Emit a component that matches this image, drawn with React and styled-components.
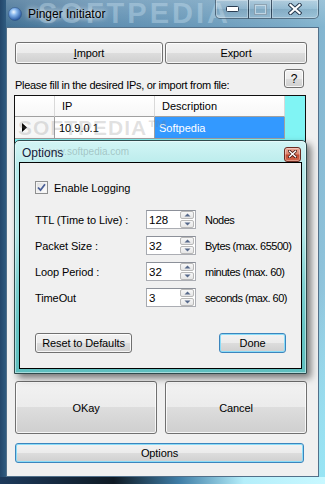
import React from 'react';
import styled, { createGlobalStyle } from 'styled-components';

const Global = createGlobalStyle`
  html, body { margin: 0; padding: 0; background: #3d6688; }
  body { font-family: "Liberation Sans", Arial, sans-serif; font-size: 11px; color: #000; }
  * { box-sizing: border-box; }
`;

const Window = styled.div`
  position: relative;
  width: 325px;
  height: 484px;
  overflow: hidden;
  display: flex;
  flex-direction: column;
  background:
    linear-gradient(90deg, #1d3a5c 0%, #0f1a24 35%, #3f7da6 55%, #b4eefa 75%, #c8f8ff 100%) left bottom / 100% 7px no-repeat,
    linear-gradient(90deg, #23476b 0, #2f5b80 6px, rgba(0,0,0,0) 6px) left top / 100% 100% no-repeat,
    linear-gradient(180deg, rgba(0,0,0,0) 60%, rgba(150,230,245,0.9) 100%) right top / 7px 100% no-repeat,
    linear-gradient(180deg, rgba(255,255,255,0.2) 0, rgba(255,255,255,0) 27px),
    linear-gradient(100deg, #3e6c90 0%, #5d8db0 25%, #6a9aba 50%, #79a9c6 70%, #8ec2da 90%, #a4dcee 100%);
`;

const TitleBar = styled.div`
  position: relative;
  height: 27px;
  display: flex;
  align-items: flex-start;
  padding-left: 8px;
  flex-shrink: 0;
`;

const TitleWatermark = styled.span`
  position: absolute;
  left: 38px;
  top: 0;
  font-size: 29px;
  line-height: 27px;
  font-weight: bold;
  letter-spacing: 3px;
  color: rgba(205, 228, 242, 0.38);
  pointer-events: none;
  white-space: nowrap;
`;

const GlobeIcon = styled.svg`
  margin-top: 7px;
  position: relative;
  flex-shrink: 0;
`;

const TitleText = styled.span`
  position: relative;
  margin-left: 6px;
  margin-top: 6px;
  font-size: 12px;
  line-height: 16px;
  color: #000;
  text-shadow: 0 0 5px rgba(255,255,255,0.95), 0 0 10px rgba(255,255,255,0.7);
`;

const Caption = styled.div`
  position: relative;
  margin-left: auto;
  margin-right: 6px;
  display: flex;
  height: 19px;
`;

const CapBtn = styled.div`
  width: ${p => p.$w}px;
  height: 19px;
  margin-left: ${p => (p.$first ? 0 : -1)}px;
  border: 1px solid rgba(20, 40, 60, 0.55);
  border-top: none;
  border-radius: ${p => (p.$first ? '0 0 0 5px' : p.$last ? '0 0 5px 0' : '0')};
  box-shadow: inset 0 0 0 1px rgba(255,255,255,0.3);
  background: linear-gradient(180deg, rgba(255,255,255,0.28) 0%, rgba(255,255,255,0.08) 50%, rgba(0,0,0,0.04) 50%, rgba(255,255,255,0.16) 100%);
  display: flex;
  align-items: center;
  justify-content: center;
`;

const Client = styled.div`
  margin: 0 6px 7px 6px;
  height: 450px;
  background: #f0f0f0;
  border: 1px solid #52708a;
  display: flex;
  flex-direction: column;
  padding: 14px 0 0 8px;
`;

const Btn = styled.button`
  font-family: inherit;
  font-size: 11px;
  color: #000;
  width: ${p => p.$w}px;
  height: ${p => p.$h || 22}px;
  padding: 0;
  margin: 0;
  flex-shrink: 0;
  border: 1px solid ${p => (p.$default ? '#3c85bd' : '#707070')};
  border-radius: 3px;
  background: linear-gradient(180deg, #f2f2f2 0%, #ebebeb 50%, #dddddd 50%, #cfcfcf 100%);
  box-shadow: inset 0 0 0 1px ${p => (p.$default ? '#8adcf8' : 'rgba(255,255,255,0.8)')};
  display: flex;
  align-items: center;
  justify-content: center;
  cursor: default;
  letter-spacing: -0.1px;
`;

const TopRow = styled.div`
  display: flex;
  gap: 2px;
`;

const HelpRow = styled.div`
  margin-top: 5px;
  height: 26px;
  display: flex;
  justify-content: space-between;
  padding-right: 14px;
`;

const HelpLabel = styled.span`
  align-self: flex-end;
  line-height: 13px;
  margin-bottom: 3px;
  letter-spacing: -0.3px;
`;

const HelpBtn = styled(Btn)`
  align-self: flex-start;
  font-size: 12px;
`;

const Grid = styled.div`
  position: relative;
  width: 292px;
  height: 276px;
  margin-left: -1px;
  border: 1px solid #101010;
  background: #80f4f4;
  display: grid;
  grid-template-columns: 40px 100px 130px;
  grid-template-rows: 21px 22px;
  align-content: start;
`;

const HeadCell = styled.div`
  background: linear-gradient(180deg, #ffffff 0%, #f7f7f7 100%);
  border-right: 1px solid #d9d9d9;
  border-bottom: 1px solid #a0a0a0;
  padding-left: ${p => p.$pad || 0}px;
  display: flex;
  align-items: center;
  font-size: 11px;
`;

const Cell = styled.div`
  background: ${p => (p.$selected ? '#3399ff' : p.$rowHead ? '#f7f7f7' : '#ffffff')};
  color: ${p => (p.$selected ? '#fff' : '#000')};
  border-right: 1px solid #a0a0a0;
  border-bottom: 1px solid #a0a0a0;
  padding-left: ${p => p.$pad || 0}px;
  display: flex;
  align-items: center;
`;

const GridWatermark = styled.span`
  position: absolute;
  left: 3px;
  top: 20px;
  font-size: 21px;
  font-weight: bold;
  letter-spacing: 1px;
  color: rgba(120, 120, 120, 0.22);
  pointer-events: none;
  white-space: nowrap;
`;

const BigRow = styled.div`
  margin-top: 10px;
  display: flex;
  gap: 8px;
`;

const OptionsRow = styled.div`
  margin-top: 9px;
  display: flex;
`;

const Dialog = styled.div`
  position: absolute;
  left: 14px;
  top: 140px;
  width: 293px;
  height: 234px;
  border: 1px solid #2f4a4c;
  border-radius: 5px 5px 0 0;
  background: linear-gradient(180deg, #d2f5f5 0%, #b6eaea 12%, #b0e6e6 40%, #7ed0d0 62%, #66c4c4 80%, #5ebebe 100%);
  box-shadow: 4px 4px 7px rgba(0, 0, 0, 0.5), inset 0 0 0 1px rgba(255,255,255,0.45);
  display: flex;
  flex-direction: column;
  padding: 0 4px 4px 4px;
`;

const DialogTitle = styled.div`
  position: relative;
  height: 21px;
  display: flex;
  align-items: center;
  padding-left: 3px;
`;

const DialogTitleText = styled.span`
  position: relative;
  font-size: 12px;
  color: #14203a;
  margin-top: 3px;
  text-shadow: 0 0 6px rgba(255,255,255,0.9);
`;

const DialogWatermark = styled.span`
  position: absolute;
  left: 24px;
  top: 5px;
  font-size: 10px;
  color: rgba(110, 130, 130, 0.4);
  pointer-events: none;
`;

const DialogClose = styled.div`
  margin-left: auto;
  margin-right: 1px;
  margin-top: 5px;
  width: 17px;
  height: 15px;
  border: 1px solid #6b2c22;
  border-radius: 3px;
  background: linear-gradient(180deg, #ecaa98 0%, #dc8670 45%, #c4482f 55%, #d0664c 100%);
  box-shadow: inset 0 0 0 1px rgba(255,255,255,0.35);
  display: flex;
  align-items: center;
  justify-content: center;
`;

const DialogClient = styled.div`
  flex: 1;
  border: 1px solid #000;
  background: #f0f0f0;
  padding: 18px 0 0 15px;
  display: flex;
  flex-direction: column;
`;

const CheckRow = styled.label`
  display: flex;
  align-items: center;
  height: 13px;
  gap: 6px;
`;

const CheckBox = styled.span`
  width: 13px;
  height: 13px;
  border: 1px solid #8e8f8f;
  background: linear-gradient(135deg, #dcdcdc 0%, #f6f6f6 70%, #ffffff 100%);
  box-shadow: inset 0 0 0 1px #f4f4f4;
  display: flex;
  align-items: center;
  justify-content: center;
`;

const FormGrid = styled.div`
  margin-top: 16px;
  display: grid;
  grid-template-columns: 102px 50px auto;
  grid-auto-rows: 19px;
  column-gap: 9px;
  row-gap: 7px;
  align-items: center;
`;

const FieldLabel = styled.span`
  letter-spacing: -0.1px;
`;

const Spin = styled.div`
  width: 50px;
  height: 19px;
  border: 1px solid #abadb3;
  border-top-color: #8c9099;
  border-left-color: #a5a9b0;
  background: #fff;
  display: flex;
  align-items: stretch;
`;

const SpinValue = styled.span`
  flex: 1;
  padding-left: 2px;
  display: flex;
  align-items: center;
  font-size: 11.5px;
`;

const SpinBtns = styled.div`
  width: 15px;
  padding: 0 1px 0 0;
  display: flex;
  flex-direction: column;
  gap: 1px;
`;

const SpinBtn = styled.div`
  flex: 1;
  border: 1px solid #b8b8b8;
  border-radius: 2px;
  background: linear-gradient(180deg, #f7f7f7 0%, #e6e6e6 100%);
  display: flex;
  align-items: center;
  justify-content: center;
`;

const Units = styled.span`
  letter-spacing: -0.5px;
  white-space: nowrap;
`;

const DialogButtons = styled.div`
  margin-top: 26px;
  display: flex;
  gap: 87px;
`;

const Arrow = ({ up }) => (
  <svg width="7" height="4" viewBox="0 0 7 4">
    <path d={up ? 'M0.5 3.5 L3.5 0.5 L6.5 3.5 Z' : 'M0.5 0.5 L3.5 3.5 L6.5 0.5 Z'} fill="#56698a" />
  </svg>
);

const SpinField = ({ value }) => (
  <Spin>
    <SpinValue>{value}</SpinValue>
    <SpinBtns>
      <SpinBtn><Arrow up /></SpinBtn>
      <SpinBtn><Arrow /></SpinBtn>
    </SpinBtns>
  </Spin>
);

const rows = [
  ['TTL (Time to Live) :', '128', 'Nodes'],
  ['Packet Size :', '32', 'Bytes (max. 65500)'],
  ['Loop Period :', '32', 'minutes (max. 60)'],
  ['TimeOut', '3', 'seconds (max. 60)'],
];

export default function App() {
  return (
    <>
      <Global />
      <Window>
        <TitleBar>
          <TitleWatermark>SOFTPEDIA</TitleWatermark>
          <GlobeIcon width="14" height="14" viewBox="0 0 14 14">
            <defs>
              <radialGradient id="globe" cx="40%" cy="35%" r="70%">
                <stop offset="0" stopColor="#eef7ff" />
                <stop offset="0.35" stopColor="#86b6ec" />
                <stop offset="1" stopColor="#1c4c98" />
              </radialGradient>
            </defs>
            <circle cx="7" cy="7" r="6.5" fill="url(#globe)" stroke="#2a4f80" strokeWidth="0.5" />
          </GlobeIcon>
          <TitleText>Pinger Initiator</TitleText>
          <Caption>
            <CapBtn $w={34} $first>
              <svg width="13" height="6" viewBox="0 0 13 6">
                <rect x="0.5" y="0.5" width="12" height="5" rx="1" fill="#fff" stroke="#2a3d52" />
              </svg>
            </CapBtn>
            <CapBtn $w={24}>
              <svg width="13" height="11" viewBox="0 0 13 11">
                <rect x="1" y="1" width="11" height="9" fill="none" stroke="rgba(210,225,235,0.75)" strokeWidth="2" />
                <rect x="0.5" y="0.5" width="12" height="10" fill="none" stroke="rgba(40,60,80,0.35)" />
              </svg>
            </CapBtn>
            <CapBtn $w={48} $last>
              <svg width="14" height="12" viewBox="0 0 14 12">
                <path d="M2.5 2 L11.5 10 M11.5 2 L2.5 10" stroke="#2a3d52" strokeWidth="4.2" strokeLinecap="square" />
                <path d="M2.5 2 L11.5 10 M11.5 2 L2.5 10" stroke="#ffffff" strokeWidth="2.2" strokeLinecap="square" />
              </svg>
            </CapBtn>
          </Caption>
        </TitleBar>

        <Client>
          <TopRow>
            <Btn $w={148}><u>I</u>mport</Btn>
            <Btn $w={142}>Export</Btn>
          </TopRow>
          <HelpRow>
            <HelpLabel>Please fill in the desired IPs, or import from file:</HelpLabel>
            <HelpBtn $w={20} $h={19}>?</HelpBtn>
          </HelpRow>
          <Grid>
            <HeadCell />
            <HeadCell $pad={7}>IP</HeadCell>
            <HeadCell $pad={7}>Description</HeadCell>
            <Cell $rowHead $pad={7}>
              <svg width="5" height="9" viewBox="0 0 5 9"><path d="M0 0 L5 4.5 L0 9 Z" fill="#000" /></svg>
            </Cell>
            <Cell $pad={4}>10.9.0.1</Cell>
            <Cell $selected $pad={4}>Softpedia</Cell>
            <GridWatermark>SOFTPEDIA™</GridWatermark>
          </Grid>
          <BigRow>
            <Btn $w={142} $h={53}>OKay</Btn>
            <Btn $w={142} $h={53}>Cancel</Btn>
          </BigRow>
          <OptionsRow>
            <Btn $w={289} $h={20} $default>Options</Btn>
          </OptionsRow>
        </Client>

        <Dialog>
          <DialogTitle>
            <DialogWatermark>www.softpedia.com</DialogWatermark>
            <DialogTitleText>Options</DialogTitleText>
            <DialogClose>
              <svg width="9" height="8" viewBox="0 0 9 8">
                <path d="M1.5 1.2 L7.5 6.8 M7.5 1.2 L1.5 6.8" stroke="#4a1a14" strokeWidth="3" strokeLinecap="square" />
                <path d="M1.5 1.2 L7.5 6.8 M7.5 1.2 L1.5 6.8" stroke="#ffffff" strokeWidth="1.4" strokeLinecap="square" />
              </svg>
            </DialogClose>
          </DialogTitle>
          <DialogClient>
            <CheckRow>
              <CheckBox>
                <svg width="9" height="9" viewBox="0 0 9 9">
                  <path d="M1 4.5 L3.5 7.2 L8 1.2" fill="none" stroke="#4a5f97" strokeWidth="1.8" />
                </svg>
              </CheckBox>
              <span>Enable Logging</span>
            </CheckRow>
            <FormGrid>
              {rows.map(([label, value, unit]) => (
                <React.Fragment key={label}>
                  <FieldLabel>{label}</FieldLabel>
                  <SpinField value={value} />
                  <Units>{unit}</Units>
                </React.Fragment>
              ))}
            </FormGrid>
            <DialogButtons>
              <Btn $w={97} $h={20}>Reset to Defaults</Btn>
              <Btn $w={67} $h={20} $default>Done</Btn>
            </DialogButtons>
          </DialogClient>
        </Dialog>
      </Window>
    </>
  );
}
